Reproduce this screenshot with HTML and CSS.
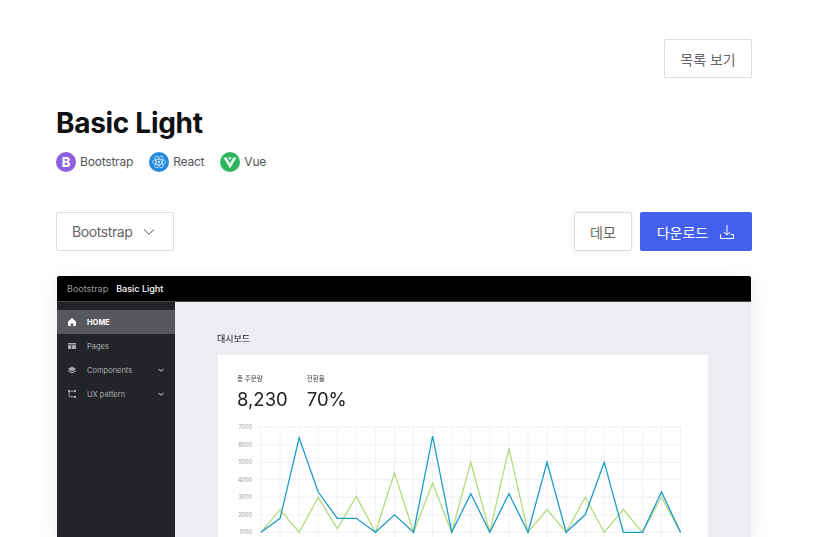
FILE: index.html
```html
<!DOCTYPE html>
<html lang="ko">

<head>
    <meta charset="utf-8">
    <title>Basic Light</title>
    <link rel="stylesheet" href="styles.css">
</head>

<body>
    <div class="page">
        <div class="top-actions">
            <a class="btn btn-list">목록 보기</a>
        </div>

        <h1 class="title">Basic Light</h1>

        <div class="tags">
            <span class="tag">
                <span class="tag-icon tag-bootstrap">B</span>
                Bootstrap
            </span>
            <span class="tag">
                <svg class="tag-icon tag-react" viewBox="0 0 20 20" fill="none" stroke="#cfe6fa" stroke-width=".8">
                    <ellipse cx="10" cy="10" rx="6.6" ry="2.7"/>
                    <ellipse cx="10" cy="10" rx="6.6" ry="2.7" transform="rotate(60 10 10)"/>
                    <ellipse cx="10" cy="10" rx="6.6" ry="2.7" transform="rotate(120 10 10)"/>
                    <circle cx="10" cy="10" r="1.2" fill="#cfe6fa" stroke="none"/>
                </svg>
                React
            </span>
            <span class="tag">
                <svg class="tag-icon tag-vue" viewBox="0 0 20 20">
                    <path d="M3.4 5.6h13.2L10 16.4z" fill="#e3f5e8"/>
                    <path d="M6.6 5.6h6.8L10 11.2z" fill="#2fb35e"/>
                    <path d="M8.4 5.6h3.2L10 8.2z" fill="#e3f5e8"/>
                </svg>
                Vue
            </span>
        </div>

        <div class="toolbar">
            <a class="btn btn-select">
                Bootstrap
                <svg width="12" height="12" viewBox="0 0 12 12" fill="none" stroke="#555" stroke-width="1">
                    <path d="M1 3.5 6 8.2l5-4.7"/>
                </svg>
            </a>
            <div class="toolbar-right">
                <a class="btn btn-demo">데모</a>
                <a class="btn btn-primary">
                    다운로드
                    <svg width="16" height="16" viewBox="0 0 16 16" fill="none" stroke="#fff" stroke-width="1">
                        <path d="M8 1v10M5 8l3 3 3-3M1.5 10.5v4h13v-4h-3"/>
                    </svg>
                </a>
            </div>
        </div>

        <div class="preview">
            <div class="preview-inner">
                <div class="pv-header">
                    <span class="pv-brand">Bootstrap</span>
                    <span class="pv-name">Basic Light</span>
                </div>
                <div class="pv-body">
                    <div class="pv-sidebar">
                        <div class="pv-item active">
                            <svg viewBox="0 0 10 10" fill="#fff"><path d="M5 1 1 4.5V9h2.8V6.4h2.4V9H9V4.5z"/></svg>
                            HOME
                        </div>
                        <div class="pv-item">
                            <svg viewBox="0 0 10 10" fill="#a9aaad"><path d="M1 2h8v1.6H1zM1 4.2h3.4V8H1zM5 4.2h4V8H5z"/></svg>
                            Pages
                        </div>
                        <div class="pv-item">
                            <svg viewBox="0 0 10 10" fill="#a9aaad"><path d="M5 1.4 9.2 4 5 6.4.8 4zM1.8 5.6 5 7.4l3.2-1.8 1 .6L5 8.6.8 6.2z"/></svg>
                            Components
                            <svg class="pv-caret" viewBox="0 0 10 10" fill="none" stroke="#a9aaad" stroke-width="1.3"><path d="M2 3.6 5 6.4l3-2.8"/></svg>
                        </div>
                        <div class="pv-item">
                            <svg viewBox="0 0 10 10" fill="none" stroke="#a9aaad" stroke-width=".9"><path d="M2.2 2.2h5.6M2.2 2.2v5.6h5.6"/><path d="M1 1h2v2H1zM7 1h2v2H7zM7 7h2v2H7z" fill="#a9aaad" stroke="none"/></svg>
                            UX pattern
                            <svg class="pv-caret" viewBox="0 0 10 10" fill="none" stroke="#a9aaad" stroke-width="1.3"><path d="M2 3.6 5 6.4l3-2.8"/></svg>
                        </div>
                    </div>
                    <div class="pv-main">
                        <div class="pv-title">대시보드</div>
                        <div class="pv-card">
                            <div class="stats">
                                <div class="stat">
                                    <div class="stat-label">총 주문량</div>
                                    <div class="stat-value">8,230</div>
                                </div>
                                <div class="stat">
                                    <div class="stat-label">전환율</div>
                                    <div class="stat-value">70%</div>
                                </div>
                            </div>
                            <svg class="chart" id="chart" width="450" height="120" viewBox="0 0 450 120"></svg>
                        </div>
                    </div>
                </div>
            </div>
        </div>
    </div>

    <script>
        const blue = [1000, 1800, 6400, 3300, 1800, 1800, 1000, 2000, 1000, 6500, 1000, 3200, 1000, 3200, 1000, 5000, 1000, 2000, 5000, 1000, 1000, 3300, 1000];
        const green = [1000, 2300, 1000, 3000, 1200, 3050, 1000, 4400, 1000, 3800, 1000, 5000, 1000, 5800, 1000, 2300, 1000, 3000, 1000, 2300, 1000, 3000, 1000];

        const left = 24, stepX = 19.07, top7000 = 5.3, stepY = 17.5;
        const xAt = i => left + stepX * i;
        const yAt = v => top7000 + (7000 - v) / 1000 * stepY;

        let out = '';
        for (let i = 0; i < 23; i++) {
            out += `<line x1="${xAt(i)}" x2="${xAt(i)}" y1="${top7000}" y2="120" stroke="#f1f1f4"/>`;
        }
        for (let v = 1000; v <= 7000; v += 1000) {
            out += `<line x1="20" x2="${xAt(22)}" y1="${yAt(v)}" y2="${yAt(v)}" stroke="#f1f1f4"/>`;
            out += `<text x="15" y="${yAt(v) + 2}" text-anchor="end" class="chart-label">${v}</text>`;
        }
        const line = (data, color) => {
            const pts = data.map((v, i) => xAt(i) + ',' + yAt(v)).join(' ');
            return `<polyline points="${pts}" fill="none" stroke="${color}" stroke-width="1.3"/>`;
        };
        out += line(green, '#b4da7e');
        out += line(blue, '#1d9bc8');
        document.getElementById('chart').innerHTML = out;
    </script>
</body>

</html>
```

FILE: styles.css
```css
html, body {
    margin: 0;
    height: 100%;
    overflow: hidden;
}

body {
    font-family: Inter, "Noto Sans CJK KR", sans-serif;
    background-color: white;
    color: #555;
}

.page {
    padding: 39px 72px 0 56px;
}

.top-actions {
    display: flex;
    justify-content: flex-end;
}

.btn {
    display: inline-flex;
    align-items: center;
    justify-content: center;
    box-sizing: border-box;
    height: 39px;
    padding: 0 15px;
    border: 1px solid #ddd;
    border-radius: 2px;
    background-color: white;
    font-size: 14px;
    color: #666;
}

.btn-list {
    width: 88px;
    padding: 0;
}

.title {
    margin: 28px 0 0 0;
    font-size: 28px;
    line-height: 34px;
    font-weight: 700;
    letter-spacing: -0.3px;
    color: #111;
}

.tags {
    display: flex;
    gap: 16px;
    margin-top: 12px;
}

.tag {
    display: flex;
    align-items: center;
    gap: 4px;
    font-size: 12px;
    line-height: 20px;
    letter-spacing: -0.2px;
    color: #555;
}

.tag-icon {
    width: 20px;
    height: 20px;
    border-radius: 50%;
}

.tag-bootstrap {
    display: flex;
    align-items: center;
    justify-content: center;
    background-color: #8e5fe0;
    color: white;
    font-size: 13px;
    font-weight: 800;
}

.tag-react {
    background-color: #2289e0;
}

.tag-vue {
    background-color: #2fb35e;
}

.toolbar {
    display: flex;
    justify-content: space-between;
    margin-top: 40px;
}

.btn-select {
    width: 118px;
    justify-content: flex-start;
    gap: 11px;
    letter-spacing: -0.4px;
}

.toolbar-right {
    display: flex;
    gap: 8px;
}

.btn-demo {
    width: 58px;
    box-shadow: 0 0 4px rgba(0, 0, 0, 0.08);
}

.btn-primary {
    width: 112px;
    gap: 11px;
    border: none;
    background-color: #4361ee;
    color: white;
}

.preview {
    margin: 25px 1px 0 1px;
    border-radius: 2px 2px 0 0;
    background-color: #ecedf2;
    box-shadow: 0 4px 24px rgba(0, 0, 0, 0.08);
    height: 261px;
    overflow: hidden;
}

.preview-inner {
    filter: blur(0.3px);
}

.pv-header {
    display: flex;
    align-items: center;
    gap: 8px;
    box-sizing: border-box;
    height: 26px;
    padding-left: 10px;
    border-bottom: 1px solid #444;
    background-color: black;
    font-size: 9px;
}

.pv-brand {
    color: #999;
}

.pv-name {
    color: white;
    font-weight: 500;
}

.pv-body {
    display: flex;
}

.pv-sidebar {
    flex: none;
    box-sizing: border-box;
    width: 118px;
    height: 374px;
    padding-top: 8px;
    background-color: #232428;
}

.pv-item {
    display: flex;
    align-items: center;
    gap: 10px;
    height: 24px;
    padding: 0 10px;
    font-size: 7.5px;
    color: #a9aaad;
}

.pv-item svg {
    flex: none;
    width: 10px;
    height: 10px;
}

.pv-item.active {
    background-color: #57585c;
    color: white;
    font-weight: 700;
}

.pv-item .pv-caret {
    width: 8px;
    height: 8px;
    margin-left: auto;
}

.pv-main {
    flex: 1;
    padding: 31px 43px 0 43px;
}

.pv-title {
    margin-left: -1px;
    font-size: 9px;
    line-height: 12px;
    color: #111;
}

.pv-card {
    margin-top: 10px;
    padding: 19px 19px 0 19px;
    background-color: white;
    height: 300px;
}

.stats {
    display: flex;
    gap: 19px;
}

.stat-label {
    font-size: 6.5px;
    line-height: 10px;
    color: #444;
}

.stat-value {
    margin-top: 2px;
    font-size: 18.5px;
    line-height: 26px;
    color: #222;
}

.chart {
    display: block;
    margin-top: 10px;
}

.chart-label {
    font-size: 5.5px;
    fill: #999;
}
```
